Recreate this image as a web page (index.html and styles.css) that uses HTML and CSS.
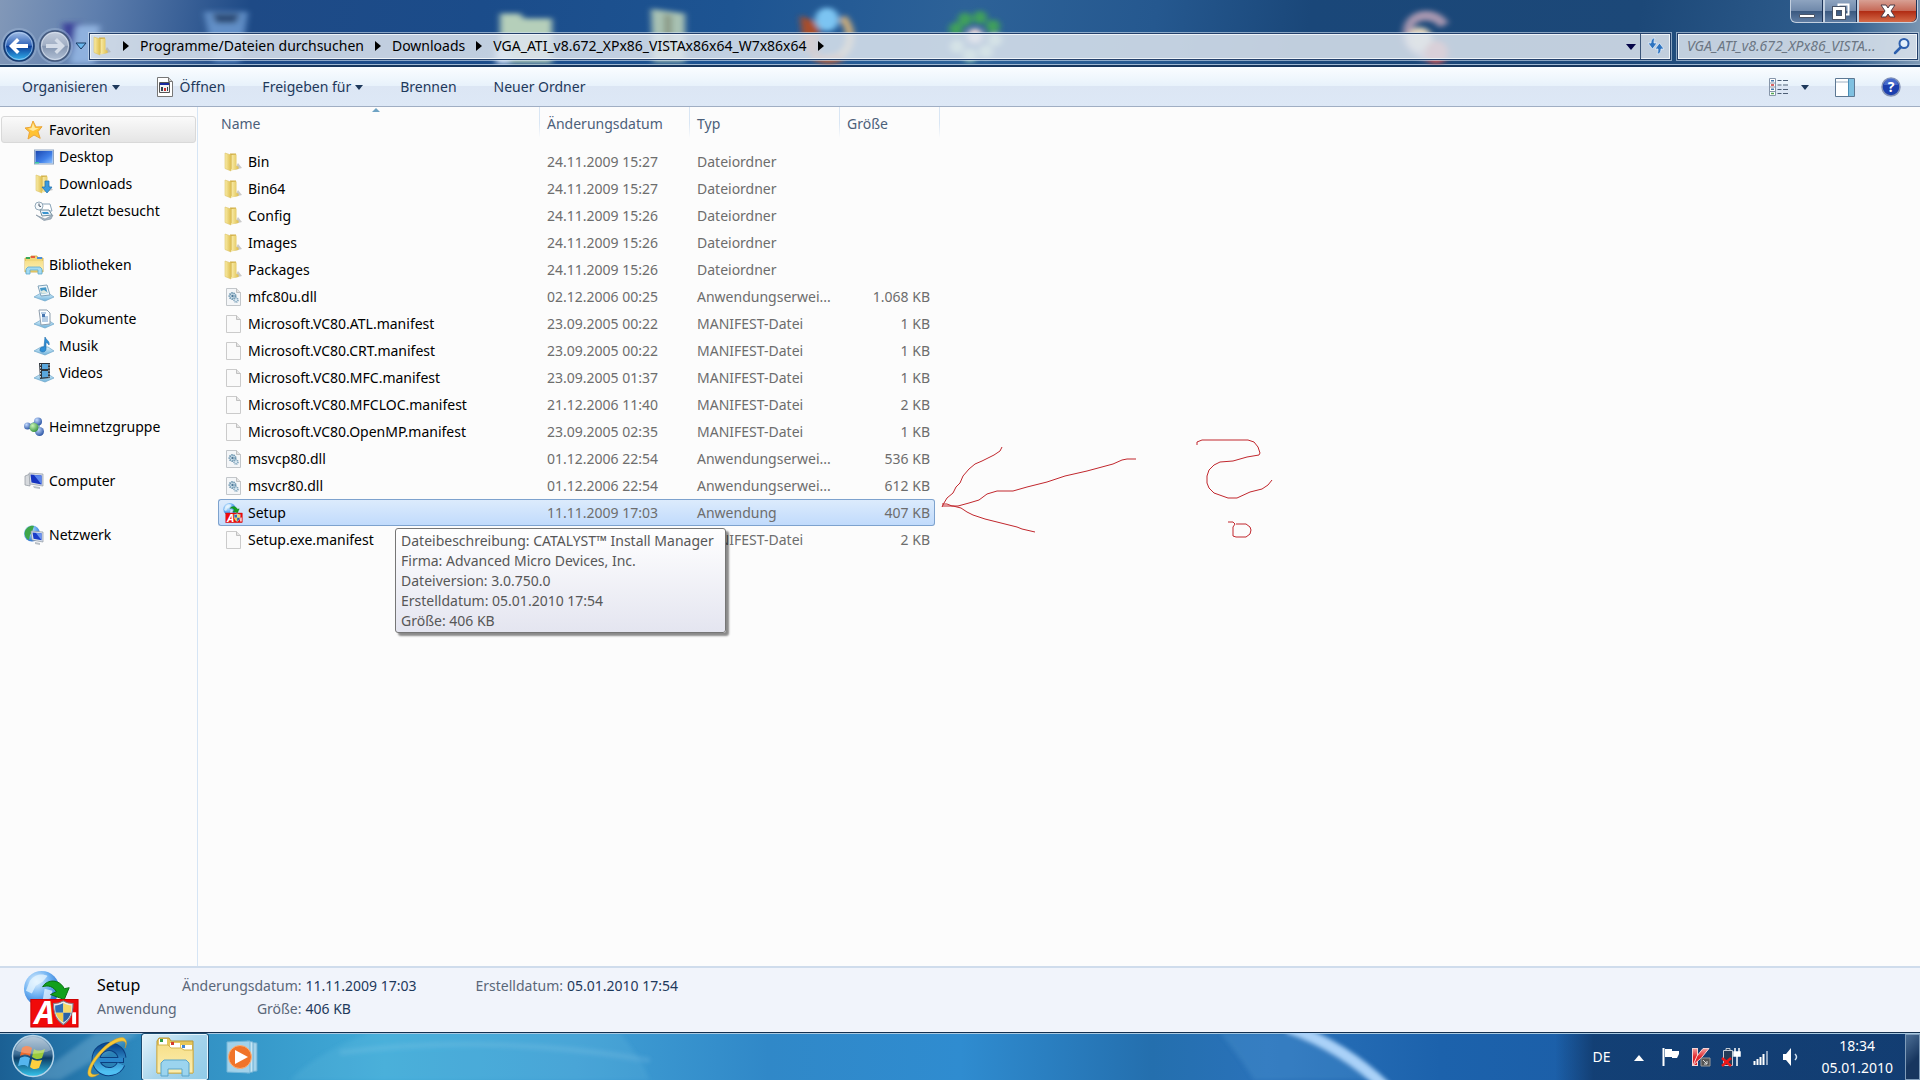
FILE: index.html
```html
<!DOCTYPE html>
<html lang="de">
<head>
    <meta charset="UTF-8">
    <meta name="viewport" content="width=device-width, initial-scale=1.0">
    <title>VGA_ATI_v8.672_XPx86_VISTAx86x64_W7x86x64</title>
    <link rel="stylesheet" href="styles.css">
</head>
<body>
    <!-- Icon library -->
    <svg class="icon-defs" aria-hidden="true">
        <defs>
            <linearGradient id="g-folder" x1="0" x2="1"><stop offset="0" stop-color="#f9eca8"/><stop offset="1" stop-color="#dfbf4e"/></linearGradient>
            <linearGradient id="g-folder-v" x1="0" y1="0" x2="0" y2="1"><stop offset="0" stop-color="#f7e08a"/><stop offset="1" stop-color="#fbeeb0"/></linearGradient>
            <linearGradient id="g-blue" x1="0" y1="0" x2="1" y2="1"><stop offset="0" stop-color="#1c48b0"/><stop offset=".6" stop-color="#3f7fe8"/><stop offset="1" stop-color="#8cc0ff"/></linearGradient>
            <linearGradient id="g-tray" x1="0" y1="0" x2="0" y2="1"><stop offset="0" stop-color="#d8effa"/><stop offset="1" stop-color="#6fb2dc"/></linearGradient>
            <linearGradient id="g-back" x1="0" y1="0" x2="0" y2="1"><stop offset="0" stop-color="#a9c4ea"/><stop offset=".48" stop-color="#2f63b8"/><stop offset=".5" stop-color="#0b3a96"/><stop offset="1" stop-color="#35b9f2"/></linearGradient>
            <linearGradient id="g-fwd" x1="0" y1="0" x2="0" y2="1"><stop offset="0" stop-color="#c4cedd"/><stop offset=".48" stop-color="#a0aec4"/><stop offset=".5" stop-color="#8495b0"/><stop offset="1" stop-color="#b4c3d8"/></linearGradient>
            <linearGradient id="g-orb" x1="0" y1="0" x2="0" y2="1"><stop offset="0" stop-color="#9fb9cf"/><stop offset=".45" stop-color="#3c6d95"/><stop offset=".55" stop-color="#0c3d66"/><stop offset="1" stop-color="#35c6ee"/></linearGradient>
            <radialGradient id="g-globe" cx=".35" cy=".3" r=".8"><stop offset="0" stop-color="#e4f4ff"/><stop offset=".5" stop-color="#6cb0f2"/><stop offset="1" stop-color="#1d5fc4"/></radialGradient>
            <radialGradient id="g-ball" cx=".35" cy=".3" r=".8"><stop offset="0" stop-color="#c5dcff"/><stop offset="1" stop-color="#1c489c"/></radialGradient>
            <radialGradient id="g-green" cx=".35" cy=".3" r=".8"><stop offset="0" stop-color="#c8f5b5"/><stop offset="1" stop-color="#2c8a35"/></radialGradient>
            <linearGradient id="g-ie" x1="0" y1="0" x2="0" y2="1"><stop offset="0" stop-color="#0c4c93"/><stop offset="1" stop-color="#4fc0f2"/></linearGradient>
            <linearGradient id="g-kav" x1="0" y1="0" x2="0" y2="1"><stop offset="0" stop-color="#f3a0a0"/><stop offset=".5" stop-color="#e0262c"/></linearGradient>
            <filter id="blur-icons" x="-30%" y="-30%" width="160%" height="160%"><feGaussianBlur stdDeviation="3"/></filter>
            <filter id="blur-streak" x="-30%" y="-30%" width="160%" height="160%"><feGaussianBlur stdDeviation="2"/></filter>

            <symbol id="i-folder" viewBox="0 0 20 20">
                <path d="M11 18l8-2-4-5z" fill="#a9a9a9" opacity=".6"/>
                <path d="M7 1.500h6V15l-6 3z" fill="#d2b048"/>
                <path d="M8.500 3l5-.5V14l2 .5V17l-7 1.500z" fill="url(#g-folder)"/>
                <path d="M2 1l6 2v16L2 16.500z" fill="url(#g-folder)" stroke="#dcc267" stroke-width=".6"/>
            </symbol>
            <symbol id="i-file" viewBox="0 0 20 20">
                <path d="M3.500 1.500h10l4 4v13h-14z" fill="#fafafa" stroke="#cbcbcb"/>
                <path d="M13.500 1.500v4h4" fill="#e4e4e4" stroke="#b5b5b5" stroke-width=".8"/>
            </symbol>
            <symbol id="i-dll" viewBox="0 0 20 20">
                <path d="M3.500 1.500h10l4 4v13h-14z" fill="#f4f6f8" stroke="#c2c6ca"/>
                <path d="M13.500 1.500v4h4" fill="#e4e4e4" stroke="#b5b5b5" stroke-width=".8"/>
                <circle cx="9.500" cy="9" r="3" fill="#d8e8f2" stroke="#6e96b0" stroke-width="2" stroke-dasharray="1.400 .7"/>
                <circle cx="9.500" cy="9" r="1.200" fill="#4d7795"/>
                <circle cx="13" cy="13" r="2" fill="#d8e8f2" stroke="#7ba0b8" stroke-width="1.500" stroke-dasharray="1 .6"/>
            </symbol>
            <symbol id="i-shield" viewBox="0 0 20 24">
                <path d="M10 1c3 2 6 2.500 9 2.500 0 9-2 15-9 19.500C3 18.500 1 12.500 1 3.500 4 3.500 7 3 10 1z" fill="#e8edf2" stroke="#7b7f86"/>
                <path d="M10 3v9H3c-.5-2-.6-4-.5-6.700C5 5.200 7.500 4.500 10 3z" fill="#2f70b5"/>
                <path d="M10 3v9h7c.5-2 .6-4 .5-6.700C15 5.200 12.500 4.500 10 3z" fill="#f5d868"/>
                <path d="M10 12v9c-4-2.500-6-5-7-9z" fill="#f2cc4d"/>
                <path d="M10 12v9c4-2.500 6-5 7-9z" fill="#2862a6"/>
            </symbol>
            <symbol id="i-setup" viewBox="0 0 58 58">
                <circle cx="19" cy="18" r="18" fill="url(#g-globe)"/>
                <path d="M7 10c6-8 14-7 18-5l-5 6-7 4-4 8-6-3zM22 18l8 2-2 8-8 2z" fill="#e7f5ff" opacity=".75"/>
                <path d="M20 16c5-8 17-8 22 2l5-1-5 12-14-5 6-3c-3-5-8-7-14-5z" fill="#12a01c" stroke="#087010"/>
                <rect x="8" y="29" width="48" height="28" fill="#f00a0a" stroke="#c00"/>
                <text x="12" y="54" class="logo-a">A</text>
                <path d="M50 42h4v12h-4z" fill="#fff"/>
                <use href="#i-shield" x="30" y="29" width="22" height="27"/>
            </symbol>
            <symbol id="i-star" viewBox="0 0 20 20">
                <path d="M9 1l3 6 6-.3-4 5 2.200 6.600L10 15l-6 4 1.500-7L1 8l5.800-.8z" fill="#ffc233" stroke="#eaa53a"/>
                <path d="M9 3l2 5 4 .3L9 11 4 8.800 7.500 8z" fill="#ffe9a0"/>
            </symbol>
            <symbol id="i-desktop" viewBox="0 0 20 20">
                <rect x=".5" y="3" width="19" height="14" fill="#d5e3f5" stroke="#8fa5c2"/>
                <rect x="1.500" y="4" width="17" height="12" fill="url(#g-blue)"/>
                <path d="M1 15h4v1.500H1z" fill="#3cc8a0"/>
            </symbol>
            <symbol id="i-downloads" viewBox="0 0 20 20">
                <use href="#i-folder" width="20" height="20"/>
                <path d="M11 7h4v6h3l-5 6-5-6h3z" fill="#3b9ade" stroke="#1b6fb0" stroke-width=".7"/>
            </symbol>
            <symbol id="i-recent" viewBox="0 0 20 20">
                <path d="M5 3h11l2 7H7z" fill="#fff" stroke="#8aa4b8"/>
                <circle cx="5" cy="5" r="4" fill="#f5f9fc" stroke="#93a9b9"/>
                <path d="M5 2.500V5l2 .5" fill="none" stroke="#456"/>
                <path d="M6 9h9l3 5-10 1z" fill="#e9f3fa" stroke="#75909f"/>
                <path d="M8 11h6l1 2H9z" fill="#3994cf"/>
                <path d="M2 14l9 4 8-4-2 4-7 1.500z" fill="#a7b8c6" stroke="#7a8c9a" stroke-width=".6"/>
            </symbol>
            <symbol id="i-libs" viewBox="0 0 20 20">
                <path d="M1 3h5l1-2h6l1 2h5v14H1z" fill="#f0d77a" stroke="#c9a63c" stroke-width=".8"/>
                <path d="M2 2h4v2H2z" fill="#38a856"/><path d="M7 1h4v2H7z" fill="#e65b3c"/><path d="M13 2h5v2h-5z" fill="#4c8ed8"/>
                <path d="M1 6h18v9H1z" fill="url(#g-folder-v)"/>
                <path d="M2 19v-5l2-2h12l2 2v5h-4v-4H6v4z" fill="#a3dbf2" stroke="#5ea9cf" stroke-width=".8"/>
            </symbol>
            <symbol id="i-base" viewBox="0 0 20 20">
                <path d="M0 15l7-4h7l6 4-9 4z" fill="url(#g-tray)" stroke="#6fa6c9" stroke-width=".7"/>
            </symbol>
            <symbol id="i-pictures" viewBox="0 0 20 20">
                <use href="#i-base" width="20" height="20"/>
                <path d="M4 4l9-1 3 10-9 1z" fill="#f0f7fb" stroke="#7fa2b9"/><path d="M6 6l6-.7L13.500 11l-6 .7z" fill="#4396c6"/><path d="M7 9l3-1 3 2 .5 1-6 .7z" fill="#dfe9df"/>
            </symbol>
            <symbol id="i-documents" viewBox="0 0 20 20">
                <use href="#i-base" width="20" height="20"/>
                <path d="M5 1h8l3 3v11l-9 1z" fill="#fbfdff" stroke="#8f9fae"/><path d="M7 4h5M8 8h6M8 10h6M8 12h6" stroke="#6f9ccb"/><path d="M8 5h3v3H8z" fill="#4776b0"/>
            </symbol>
            <symbol id="i-music" viewBox="0 0 20 20">
                <use href="#i-base" width="20" height="20"/>
                <path d="M11 1c1 3 5 4 4 8-1-2-2-2-3-2.500V13c0 4-7 4-6 0 .5-2 3-2.500 4-2z" fill="#2f8fd6" stroke="#1d6aa8" stroke-width=".6"/>
            </symbol>
            <symbol id="i-videos" viewBox="0 0 20 20">
                <use href="#i-base" width="20" height="20"/>
                <path d="M5 0h11v15L6 16z" fill="#2d343c"/><path d="M8 1h6v5H8zM8 8h6v6l-6 .5z" fill="#5aa7dd"/><path d="M6.500 1v14M15 1v14" stroke="#cdd7df" stroke-dasharray="1.500 1.500"/>
            </symbol>
            <symbol id="i-homegroup" viewBox="0 0 20 20">
                <path d="M4 9L15 3M4 9l11 7M15 3v13" stroke="#7aa" stroke-width="1.500"/>
                <circle cx="3.500" cy="9" r="3.500" fill="url(#g-ball)"/><circle cx="14" cy="4.500" r="4" fill="url(#g-ball)"/><circle cx="15.500" cy="14.500" r="4.500" fill="url(#g-ball)"/><circle cx="10" cy="10.500" r="4.500" fill="url(#g-green)"/>
            </symbol>
            <symbol id="i-computer" viewBox="0 0 20 20">
                <path d="M1 5l5-2v12l-5-1z" fill="#d6d9dd" stroke="#8d949c" stroke-width=".7"/>
                <path d="M5 2l14 1v12L6 13z" fill="#d9dee4" stroke="#949ba5" stroke-width=".7"/><path d="M6.500 3.500l11 1v9l-10-2z" fill="#1634c0"/><path d="M10 4l7.500.5v9z" fill="#5b86ee"/>
                <path d="M9 15l7 1v2l-6-1z" fill="#b9c0c7"/>
            </symbol>
            <symbol id="i-network" viewBox="0 0 20 20">
                <circle cx="8" cy="8.500" r="8" fill="url(#g-globe)"/><path d="M1 6c2-5 7-6 9-5L8 7l-2 3-1 5C1 13 0 9 1 6z" fill="#3ea64a"/>
                <path d="M7 6l12 1v10L8 15z" fill="#dfe5ec" stroke="#8c96a3" stroke-width=".7"/><path d="M8.500 7.500l9 .7v7l-8-1.500z" fill="#1a3cc8"/><path d="M12 8l5.500.3v7z" fill="#6b95f0"/>
                <path d="M11 17l5 1v2l-5-1z" fill="#b9c0c7"/>
            </symbol>
            <symbol id="i-exe" viewBox="0 0 16 20">
                <path d="M.5.500h11l4 4v15H.5z" fill="#fff" stroke="#777"/><path d="M11.500.500v4h4" fill="#ccc" stroke="#777"/>
                <path d="M2.500 5.500h10v10h-10z" fill="#f4f4f4" stroke="#555"/><path d="M3 6h9v2H3z" fill="#1b2aa0"/><path d="M4 10h2v4H4zM10 10h1v4h-1z" fill="#345"/><path d="M7 11h2v3H7z" fill="#c33"/>
            </symbol>
        </defs>
    </svg>

    <header class="titlebar">
        <svg class="wallpaper" viewBox="0 0 1920 67" preserveAspectRatio="none" aria-hidden="true">
            <g filter="url(#blur-icons)">
                <path d="M62 24h20v30H70z" fill="#3b3f9a"/><path d="M76 26h24l-6 40H70z" fill="#8fb1de"/>
                <path d="M204 12h44l-8 52h-26z" fill="#6f9fd6" opacity=".8"/><path d="M212 14h28l-4 10h-20z" fill="#2d4d78"/>
                <path d="M500 14h20l4 5h28v46h-52z" fill="#b5cfba"/><path d="M496 50h14v16h-14z" fill="#cfe0f5"/>
                <path d="M651 9l34 5v50h-32z" fill="#a9c2b4"/><path d="M664 14l8 2v40h-8z" fill="#8a9a85"/>
                <path d="M842 18c14 14 10 44-16 42" fill="none" stroke="#d3b07a" stroke-width="8"/><path d="M800 16l20 8-2 34-14-6z" fill="#a84d2c"/><path d="M812 56q14 10 30 2" fill="none" stroke="#b5603c" stroke-width="8"/><circle cx="827" cy="20" r="12" fill="#7cc4f2"/>
                <g fill="#3fa05c"><circle cx="956" cy="30" r="7"/><circle cx="965" cy="20" r="7"/><circle cx="980" cy="18" r="7"/><circle cx="993" cy="27" r="7"/></g>
                <g fill="#a9d8bc"><circle cx="995" cy="41" r="7"/><circle cx="986" cy="53" r="7"/><circle cx="970" cy="57" r="7"/><circle cx="957" cy="48" r="7"/></g>
                <circle cx="975" cy="37" r="8" fill="#eed7d7"/>
                <path d="M1444 26c-8-14-34-14-36 6-2 14 8 20 20 26" fill="none" stroke="#a797b0" stroke-width="10"/><circle cx="1420" cy="40" r="12" fill="#e6d8c0"/><circle cx="1436" cy="54" r="12" fill="#c4575a"/>
            </g>
        </svg>
        <div class="window-controls">
            <button class="control" aria-label="Minimieren"><svg width="18" height="8" viewBox="0 0 18 8"><path d="M1.500 3.500h15v3h-15z" fill="#fff" stroke="#4a5568"/></svg></button>
            <button class="control" aria-label="Verkleinern"><svg width="18" height="17" viewBox="0 0 18 17"><path d="M6.500 3V1.500h10v10h-3" fill="none" stroke="#fff" stroke-width="2"/><path d="M2.500 5.500h9v9h-9z" fill="none" stroke="#4a5568" stroke-width="5"/><path d="M2.500 5.500h9v9h-9z" fill="none" stroke="#fff" stroke-width="3"/></svg></button>
            <button class="control close" aria-label="Schließen"><svg width="16" height="14" viewBox="0 0 16 14"><path d="M1 1h5l2 3 2-3h5l-4 6 4 6h-5l-2-3-2 3H1l4-6z" fill="#fff" stroke="#4d3b46"/></svg></button>
        </div>
        <div class="nav-row">
            <div class="history">
                <button class="round" aria-label="Zurück"><svg viewBox="0 0 32 32"><circle cx="16" cy="16" r="15" fill="url(#g-back)" stroke="#173a70" stroke-width="1.500"/><circle cx="16" cy="16" r="13.500" fill="none" stroke="#b5d0f0" opacity=".7"/><path d="M6 16l8-8 2.500 2.500L13 14h12v4H13l3.500 3.500L14 24z" fill="#fff"/></svg></button>
                <button class="round" aria-label="Vorwärts"><svg viewBox="0 0 32 32"><circle cx="16" cy="16" r="15" fill="url(#g-fwd)" stroke="#44597c" stroke-width="1.500"/><circle cx="16" cy="16" r="13.500" fill="none" stroke="#dde6f2" opacity=".7"/><path d="M26 16l-8-8-2.500 2.500L19 14H7v4h12l-3.500 3.500L18 24z" fill="#d4dce8"/></svg></button>
                <button class="pages" aria-label="Zuletzt besuchte Seiten"><svg width="12" height="8" viewBox="0 0 12 8"><path d="M1 1h10L6 7z" fill="#6db8ee" stroke="#173a63"/></svg></button>
            </div>
            <nav class="address" aria-label="Adresse">
                <svg class="icon" aria-hidden="true"><use href="#i-folder"/></svg>
                <span class="arrow"></span>
                <button>Programme/Dateien durchsuchen</button>
                <span class="arrow"></span>
                <button>Downloads</button>
                <span class="arrow"></span>
                <button>VGA_ATI_v8.672_XPx86_VISTAx86x64_W7x86x64</button>
                <span class="arrow"></span>
                <button class="drop" aria-label="Vorherige Orte"><svg width="12" height="8" viewBox="0 0 12 8"><path d="M1 1h10L6 7z" fill="#050548"/></svg></button>
                <button class="refresh" aria-label="Aktualisieren"><svg width="18" height="20" viewBox="0 0 18 20"><path d="M8 2C5 2 4 4 4 7H1l4.500 6L10 7H7c0-2 0-3 1-5z" fill="#2f74c0" stroke="#eaf3ff" stroke-width=".7"/><path d="M10 18c3 0 4-2 4-5h3l-4.500-6L8 13h3c0 2 0 3-1 5z" fill="#2f74c0" stroke="#eaf3ff" stroke-width=".7"/></svg></button>
            </nav>
            <div class="search">
                <input type="search" aria-label="Suchen" placeholder="VGA_ATI_v8.672_XPx86_VISTA...">
                <svg width="18" height="18" viewBox="0 0 18 18" aria-hidden="true"><circle cx="11" cy="6.500" r="4.500" fill="#e4f0fb" stroke="#2d5fae" stroke-width="2"/><path d="M8 10l-6 6" stroke="#2d5fae" stroke-width="2.500" stroke-linecap="round"/></svg>
            </div>
        </div>
    </header>

    <div class="toolbar">
        <button>Organisieren <span class="caret"></span></button>
        <button class="open"><svg width="16" height="20" aria-hidden="true"><use href="#i-exe"/></svg>Öffnen</button>
        <button>Freigeben für <span class="caret"></span></button>
        <button>Brennen</button>
        <button>Neuer Ordner</button>
        <div class="toolbar-right">
            <button aria-label="Ansicht ändern"><svg width="20" height="18" viewBox="0 0 20 18"><path d="M.5.500h6v17h-6z" fill="#fff" stroke="#8796aa"/><path d="M.5 5h6M.5 9h6M.5 13.500h6" stroke="#8796aa"/><path d="M2 2.800h3M2 11.200h3" stroke="#47a" stroke-width="1.500"/><path d="M2 7h3" stroke="#c33" stroke-width="1.500"/><path d="M2 15.500h3" stroke="#5a5" stroke-width="1.500"/><path d="M8.500 2.500h4M14 2.500h5M8.500 7h4M14 7h5M8.500 11.500h4M14 11.500h5M8.500 15.500h4M14 15.500h5" stroke="#4d5e75"/></svg></button>
            <button aria-label="Weitere Optionen"><span class="caret"></span></button>
            <button class="preview" aria-label="Vorschaufenster"><svg width="20" height="19" viewBox="0 0 20 19"><path d="M.5.500h19v18H.5z" fill="#fff" stroke="#5d7893"/><path d="M1 4h12" stroke="#9fb0c2"/><path d="M13 1h6v17h-6z" fill="#7fc0e0"/><path d="M13.500 1v17" stroke="#4a8db5"/></svg></button>
            <button aria-label="Hilfe"><svg width="20" height="20" viewBox="0 0 20 20"><circle cx="10" cy="10" r="9" fill="#1c3fae" stroke="#8593b5" stroke-width="1.500"/><path d="M3 8a7 7 0 0 1 14 0z" fill="#6386dc" opacity=".6"/><text x="10" y="15" class="help-mark">?</text></svg></button>
        </div>
    </div>

    <div class="explorer">
        <nav class="sidebar" aria-label="Navigation">
            <a href="#" class="place selected"><svg class="icon"><use href="#i-star"/></svg>Favoriten</a>
            <a href="#" class="place child"><svg class="icon"><use href="#i-desktop"/></svg>Desktop</a>
            <a href="#" class="place child"><svg class="icon"><use href="#i-downloads"/></svg>Downloads</a>
            <a href="#" class="place child last"><svg class="icon"><use href="#i-recent"/></svg>Zuletzt besucht</a>
            <a href="#" class="place"><svg class="icon"><use href="#i-libs"/></svg>Bibliotheken</a>
            <a href="#" class="place child"><svg class="icon"><use href="#i-pictures"/></svg>Bilder</a>
            <a href="#" class="place child"><svg class="icon"><use href="#i-documents"/></svg>Dokumente</a>
            <a href="#" class="place child"><svg class="icon"><use href="#i-music"/></svg>Musik</a>
            <a href="#" class="place child last"><svg class="icon"><use href="#i-videos"/></svg>Videos</a>
            <a href="#" class="place last"><svg class="icon"><use href="#i-homegroup"/></svg>Heimnetzgruppe</a>
            <a href="#" class="place last"><svg class="icon"><use href="#i-computer"/></svg>Computer</a>
            <a href="#" class="place"><svg class="icon"><use href="#i-network"/></svg>Netzwerk</a>
        </nav>

        <main class="files">
            <table>
                <colgroup><col class="col-name"><col class="col-date"><col class="col-type"><col class="col-size"><col class="col-end"></colgroup>
                <thead>
                    <tr><th class="sorted">Name</th><th>Änderungsdatum</th><th>Typ</th><th colspan="2">Größe</th></tr>
                </thead>
                <tbody>
                    <tr><td><svg class="icon"><use href="#i-folder"/></svg>Bin</td><td>24.11.2009 15:27</td><td>Dateiordner</td><td></td></tr>
                    <tr><td><svg class="icon"><use href="#i-folder"/></svg>Bin64</td><td>24.11.2009 15:27</td><td>Dateiordner</td><td></td></tr>
                    <tr><td><svg class="icon"><use href="#i-folder"/></svg>Config</td><td>24.11.2009 15:26</td><td>Dateiordner</td><td></td></tr>
                    <tr><td><svg class="icon"><use href="#i-folder"/></svg>Images</td><td>24.11.2009 15:26</td><td>Dateiordner</td><td></td></tr>
                    <tr><td><svg class="icon"><use href="#i-folder"/></svg>Packages</td><td>24.11.2009 15:26</td><td>Dateiordner</td><td></td></tr>
                    <tr><td><svg class="icon"><use href="#i-dll"/></svg>mfc80u.dll</td><td>02.12.2006 00:25</td><td>Anwendungserwei...</td><td>1.068 KB</td></tr>
                    <tr><td><svg class="icon"><use href="#i-file"/></svg>Microsoft.VC80.ATL.manifest</td><td>23.09.2005 00:22</td><td>MANIFEST-Datei</td><td>1 KB</td></tr>
                    <tr><td><svg class="icon"><use href="#i-file"/></svg>Microsoft.VC80.CRT.manifest</td><td>23.09.2005 00:22</td><td>MANIFEST-Datei</td><td>1 KB</td></tr>
                    <tr><td><svg class="icon"><use href="#i-file"/></svg>Microsoft.VC80.MFC.manifest</td><td>23.09.2005 01:37</td><td>MANIFEST-Datei</td><td>1 KB</td></tr>
                    <tr><td><svg class="icon"><use href="#i-file"/></svg>Microsoft.VC80.MFCLOC.manifest</td><td>21.12.2006 11:40</td><td>MANIFEST-Datei</td><td>2 KB</td></tr>
                    <tr><td><svg class="icon"><use href="#i-file"/></svg>Microsoft.VC80.OpenMP.manifest</td><td>23.09.2005 02:35</td><td>MANIFEST-Datei</td><td>1 KB</td></tr>
                    <tr><td><svg class="icon"><use href="#i-dll"/></svg>msvcp80.dll</td><td>01.12.2006 22:54</td><td>Anwendungserwei...</td><td>536 KB</td></tr>
                    <tr><td><svg class="icon"><use href="#i-dll"/></svg>msvcr80.dll</td><td>01.12.2006 22:54</td><td>Anwendungserwei...</td><td>612 KB</td></tr>
                    <tr class="selected"><td><svg class="icon"><use href="#i-setup"/></svg>Setup</td><td>11.11.2009 17:03</td><td>Anwendung</td><td>407 KB</td></tr>
                    <tr><td><svg class="icon"><use href="#i-file"/></svg>Setup.exe.manifest</td><td></td><td>MANIFEST-Datei</td><td>2 KB</td></tr>
                </tbody>
            </table>

            <div class="tooltip" role="tooltip">
                Dateibeschreibung: CATALYST™ Install Manager<br>
                Firma: Advanced Micro Devices, Inc.<br>
                Dateiversion: 3.0.750.0<br>
                Erstelldatum: 05.01.2010 17:54<br>
                Größe: 406 KB
            </div>

            <!-- Red pen: arrow and question mark -->
            <svg class="scribble" width="340" height="102" viewBox="938 438 340 102" aria-hidden="true">
                <path d="M1002 447l-2 4-6 4-12 6-7 3-6 5-6 7-3 7-4 4-3 6-6 5-3 5-2 4"/>
                <path d="M942 504h5l5 2h6l11-3 10-3 8-6 10-3h16l14-4 20-5 18-6 22-5 26-7 9-4 5-1h9"/>
                <path d="M942 506h11l8 2 6 4 6 3 12 4 12 3 20 5 5 2 13 3"/>
                <path d="M1197 445v-3l5-2h46l6 2 4 5 2 6-1 2-12 2-14 4-13 1-6 3-5 5-2 6v7l2 5 5 5 14 5h9l13-6 12-3 6-4 4-5"/>
                <path d="M1228 522h5l2 2-2 3v9l3 1h10l4-3 1-4-1-3-4-3h-10"/>
            </svg>
        </main>
    </div>

    <footer class="details">
        <svg class="details-icon" aria-hidden="true"><use href="#i-setup"/></svg>
        <div class="details-name">
            <strong>Setup</strong>
            <span>Anwendung</span>
        </div>
        <dl>
            <dt>Änderungsdatum:</dt><dd>11.11.2009 17:03</dd>
            <dt>Größe:</dt><dd>406 KB</dd>
        </dl>
        <dl class="created">
            <dt>Erstelldatum:</dt><dd>05.01.2010 17:54</dd>
        </dl>
    </footer>

    <div class="taskbar">
        <svg class="wallpaper" viewBox="0 0 1920 48" preserveAspectRatio="none" aria-hidden="true">
            <g filter="url(#blur-streak)">
                <path d="M30 48L95 0h45L60 48z" fill="#9cc9e6" opacity=".3"/>
                <path d="M290 48q30-30 80-48h250q20 24 30 48z" fill="#8fd4f0" opacity=".12"/>
                <path d="M340 20q150-20 310 8" fill="none" stroke="#b9e4f6" stroke-width="5" opacity=".15"/>
                <path d="M1220 0q20 24 34 48h120q-30-30-80-48z" fill="#5fa5dc" opacity=".25"/>
                <path d="M1288-6q56 20 98 62" fill="none" stroke="#aad2f8" stroke-width="12"/>
            </g>
        </svg>
        <button class="start" aria-label="Start"><svg width="44" height="44" viewBox="0 0 44 44"><circle cx="22" cy="22" r="20.500" fill="url(#g-orb)" stroke="#b5d4e8" stroke-width="1.500"/><path d="M11 14c4-3 7-2 10 0l-2 8c-3-2-6-2-10 0z" fill="#ee6a2c"/><path d="M23 15c3 2 6 2 11 0l-3 9c-4 2-7 1-10-1z" fill="#9bcb3c"/><path d="M9 24c4-2 7-2 10 0l-2 9c-3-3-6-2-10-1z" fill="#55b5ee"/><path d="M21 25c3 2 6 2 10 1l-3 8c-4 2-7 1-9-1z" fill="#fccf3f"/><path d="M4 16a19 19 0 0 1 36 0c-10 5-26 5-36 0z" fill="#fff" opacity=".28"/></svg></button>
        <button class="task" aria-label="Internet Explorer"><svg width="42" height="42" viewBox="0 0 42 42"><path d="M35 28a13 12.500 0 1 1 1-6" fill="none" stroke="#0b3f80" stroke-width="9"/><path d="M13 24h25" stroke="#0b3f80" stroke-width="6"/><path d="M35 28a13 12.500 0 1 1 1-6" fill="none" stroke="url(#g-ie)" stroke-width="7"/><path d="M13 24h24" stroke="#2b86ca" stroke-width="4"/><path d="M39 3c-3-4-14 1-23 10C6 23-1 36 3 40c2 2 6 1 10-2-4 1-7 1-8-1-1-5 5-14 13-22 9-8 18-12 21-9 1 1 1 3 0 6 2-4 2-7 0-9z" fill="#f5c837" stroke="#c9952a" stroke-width=".5"/></svg></button>
        <button class="task active" aria-label="Explorer"><svg width="42" height="42" viewBox="0 0 42 42"><path d="M3 5l2-3h10l2 3h22v32H3z" fill="#e6c65a" stroke="#b9973a"/><path d="M5 3h8v6H5zM16 7h10v6H16zM27 9h11v6H27z" fill="#fff"/><path d="M6 3h3v3H6z" fill="#2f9a45"/><path d="M17 6h3v3h-3z" fill="#d63a2c"/><path d="M28 9h3v3h-3z" fill="#3d82d6"/><path d="M3 9h11l3 3h10l3 2h9v23H3z" fill="url(#g-folder-v)" stroke="#d4b552"/><path d="M7 40V27l3-3h22l3 3v13h-7v-7H14v7z" fill="#9bd4ee" stroke="#5ba5cb"/></svg></button>
        <button class="task" aria-label="Media Player"><svg width="36" height="36" viewBox="0 0 36 36"><path d="M24 3l8 1v28l-8 1z" fill="#a6d3ea" stroke="#6aaed2"/><path d="M22 2l6 1v30l-6 1z" fill="#c5e6f5" stroke="#6aaed2"/><path d="M2 3l23-1v32L2 33z" fill="#a2d2ea" stroke="#74b7d9"/><circle cx="15" cy="18" r="11.500" fill="#f0742a" stroke="#f9b27c"/><path d="M10 11l13 7-13 7z" fill="#fff"/></svg></button>

        <div class="tray">
            <span class="lang">DE</span>
            <button aria-label="Ausgeblendete Symbole"><svg width="12" height="8" viewBox="0 0 12 8"><path d="M6 1l5 6H1z" fill="#fff"/></svg></button>
            <svg width="20" height="20" viewBox="0 0 20 20"><path d="M2.500 1v18" stroke="#fff" stroke-width="2"/><path d="M4 2h7v2h7v3l-2 4h-5v-1H4z" fill="#fff"/></svg>
            <svg width="20" height="20" viewBox="0 0 20 20"><rect x="1.500" y="1.500" width="5" height="17" fill="url(#g-kav)" stroke="#f6d5d5"/><path d="M18 1.500h-6L6 9l-4 9.500L11 10z" fill="url(#g-kav)" stroke="#f6d5d5"/><path d="M10 11h9v8h-9z" fill="#555" stroke="#999"/><path d="M12 13l4 4m0-3v3h-3" stroke="#ddd" fill="none"/></svg>
            <svg width="20" height="20" viewBox="0 0 20 20"><path d="M2.500 3.500h9v15h-9zM5 1.500h4v2H5z" fill="#253c58" stroke="#c5cdd6"/><path d="M13 5v4h6V5zM14 1v4M18 1v4M16 9v10" stroke="#fff" stroke-width="1.500" fill="#fff"/><path d="M1 11l9 8M10 11l-9 8" stroke="#f01818" stroke-width="2.500"/></svg>
            <svg width="20" height="20" viewBox="0 0 20 20"><path d="M3.500 14v4M6.500 12v6M9.500 10v8M12.500 7v11" stroke="#fff" stroke-width="2"/><path d="M16 4v14" stroke="#8fa4bf" stroke-width="2"/></svg>
            <svg width="20" height="20" viewBox="0 0 20 20"><path d="M2 7h3l5-6v18l-5-6H2z" fill="#fff"/><path d="M14 7c2 2 2 4 0 6" stroke="#cfe0f0" fill="none" stroke-width="1.500"/></svg>
            <div class="clock"><span>18:34</span><span>05.01.2010</span></div>
        </div>
        <button class="show-desktop" aria-label="Desktop anzeigen"></button>
    </div>
</body>
</html>
```
FILE: styles.css
```css
* {
    margin: 0;
    padding: 0;
    box-sizing: border-box;
}

body {
    display: flex;
    flex-direction: column;
    min-height: 100vh;
    background: #fcfcfc;
    color: #000;
    font-family: 'Noto Sans', 'Open Sans', sans-serif;
    font-size: 14px;
    line-height: 20px;
    overflow: hidden;
}

button {
    background: none;
    border: none;
    color: inherit;
    font: inherit;
    white-space: nowrap;
}

a {
    color: inherit;
    text-decoration: none;
}

.icon-defs {
    position: absolute;
    width: 0;
    height: 0;
}

.icon {
    width: 20px;
    height: 20px;
    flex: none;
}

.logo-a {
    font: italic bold 32px 'Noto Sans', sans-serif;
    fill: #fff;
}

.help-mark {
    font: bold 14px 'Open Sans', sans-serif;
    fill: #fff;
    text-anchor: middle;
}

/* Title bar */
.titlebar {
    position: relative;
    background: linear-gradient(100deg, #8298b8 0, #5f7fae 5%, #1e4a86 13%, #1b4c8a 25%, #1d5492 38%, #2d6298 50%, #25588f 60%, #1a4779 68%, #1c4878 85%, #315f8f 96%, #7f9ab5 100%);
    border-bottom: 2px solid #17365c;
    box-shadow: inset 0 -1px #9fb8d2;
}

.wallpaper {
    position: absolute;
    inset: 0;
    width: 100%;
    height: 100%;
}

.window-controls {
    position: relative;
    display: flex;
    justify-content: flex-end;
    height: 24px;
    padding-right: 2px;
}

.control {
    display: flex;
    align-items: center;
    justify-content: center;
    width: 34px;
    height: 23px;
    border: 1px solid #c3d0e0;
    border-top: none;
    box-shadow: inset -1px 0 #1c3358;
    background: linear-gradient(#8ea4c0 0, #7089ab 48%, #3a587f 50%, #5f7da3 100%);
}

.control:first-child {
    border-radius: 0 0 0 6px;
    padding-top: 8px;
}

.control.close {
    width: 60px;
    border-radius: 0 0 6px 0;
    background: linear-gradient(#d8a094 0, #c66a58 48%, #b02a12 50%, #d46a48 100%);
}

.nav-row {
    position: relative;
    display: flex;
    align-items: center;
    gap: 6px;
    height: 41px;
    padding: 3px 2px 0 3px;
}

.history {
    display: flex;
    align-items: center;
    gap: 4px;
    width: 80px;
}

.round {
    flex: none;
    width: 32px;
    height: 32px;
    border-radius: 50%;
    box-shadow: 0 0 0 2px rgba(160, 185, 215, .45);
}

.round svg,
.pages svg {
    display: block;
}

.address,
.search {
    display: flex;
    align-items: center;
    height: 27px;
    border: 1px solid #23406b;
    outline: 1px solid rgba(210, 225, 240, .6);
    box-shadow: inset 0 0 0 1px #eef3f8;
    background: rgba(220, 228, 238, .86);
}

.address {
    flex: 1;
    padding-left: 2px;
    gap: 11px;
}

.arrow {
    border-left: 6px solid #000;
    border-top: 5px solid transparent;
    border-bottom: 5px solid transparent;
}

.drop {
    margin-left: auto;
    margin-right: -8px;
}

.refresh {
    display: flex;
    align-items: center;
    justify-content: center;
    width: 30px;
    height: 25px;
    border-left: 1px solid #3a5478;
}

.search {
    width: 241px;
    padding: 0 6px 0 9px;
}

.search input {
    flex: 1;
    min-width: 0;
    border: none;
    background: none;
    font: inherit;
    font-style: italic;
}

.search input::placeholder {
    color: #6b7683;
}

/* Command bar */
.toolbar {
    display: flex;
    align-items: center;
    gap: 37px;
    height: 40px;
    padding: 1px 19px 0 22px;
    border-bottom: 1px solid #a0aec3;
    background: linear-gradient(#fafdff 0, #e8f2fb 48%, #dce6f4 50%, #dde8f6 100%);
    color: #1e395b;
}

.toolbar button {
    display: flex;
    align-items: center;
    gap: 4px;
}

.toolbar .open {
    gap: 7px;
}

.caret {
    border-top: 5px solid #1e395b;
    border-left: 4px solid transparent;
    border-right: 4px solid transparent;
}

.toolbar-right {
    display: flex;
    align-items: center;
    gap: 12px;
    margin-left: auto;
}

.toolbar-right .preview {
    margin: 0 14px;
}

/* Explorer body */
.explorer {
    display: flex;
    flex: 1;
}

.sidebar {
    flex: none;
    width: 198px;
    padding: 9px 1px;
    border-right: 1px solid #d6e5f5;
}

.place {
    display: flex;
    align-items: center;
    gap: 5px;
    height: 27px;
    padding-left: 22px;
    border: 1px solid transparent;
    border-radius: 3px;
}

.place.child {
    padding-left: 32px;
}

.place.last {
    margin-bottom: 27px;
}

.place.selected {
    border-color: #d9d9d9;
    background: linear-gradient(#fafafa, #e5e5e5);
}

.files {
    position: relative;
    flex: 1;
    padding-left: 20px;
}

table {
    table-layout: fixed;
    width: 722px;
    border-spacing: 0;
}

.col-name {
    width: 322px;
}

.col-date,
.col-type {
    width: 150px;
}

.col-size {
    width: 95px;
}

th {
    height: 41px;
    padding: 0 7px 7px;
    background: linear-gradient(#d9e6f4 40%, transparent 75%) right / 1px 100% no-repeat;
    color: #4c607a;
    font-weight: normal;
    text-align: left;
    vertical-align: middle;
}

th:first-child {
    padding-left: 3px;
}

.sorted {
    position: relative;
}

/* sort direction mark above the column name */
.sorted::after {
    content: '';
    position: absolute;
    top: 1px;
    left: 50%;
    margin-left: -7px;
    border-bottom: 4px solid #6fa3c4;
    border-left: 4px solid transparent;
    border-right: 4px solid transparent;
}

td {
    height: 27px;
    padding: 0 7px;
    color: #6d6d6d;
    white-space: nowrap;
}

td:first-child {
    display: flex;
    align-items: center;
    gap: 5px;
    padding-left: 5px;
    color: #000;
}

td:nth-child(4) {
    padding-right: 5px;
    text-align: right;
}

tr.selected td {
    border: solid #7da2ce;
    border-width: 1px 0;
    background: linear-gradient(#dcebfc, #c1dbfc);
}

tr.selected td:first-child {
    padding-left: 4px;
    border-left-width: 1px;
    border-radius: 3px 0 0 3px;
}

tr.selected td:last-child {
    padding-right: 4px;
    border-right-width: 1px;
    border-radius: 0 3px 3px 0;
}

.tooltip {
    position: absolute;
    top: 421px;
    left: 197px;
    padding: 2px 11px 1px 5px;
    border: 1px solid #767676;
    border-radius: 3px;
    background: linear-gradient(#fff, #e4e5f0);
    box-shadow: 3px 3px 2px rgba(0, 0, 0, .45);
    color: #575757;
    white-space: nowrap;
}

.scribble {
    position: absolute;
    top: 331px;
    left: 740px;
    fill: none;
    stroke: #c1272d;
    stroke-width: 1;
}

/* Details pane */
.details {
    display: flex;
    height: 66px;
    padding: 3px 23px;
    border-top: 2px solid #cfdcec;
    background: #f1f4fb;
    color: #5a6779;
}

.details-icon {
    width: 57px;
    height: 57px;
    margin-right: 17px;
}

.details-name {
    width: 85px;
    padding-top: 2px;
}

.details-name strong {
    display: block;
    margin-bottom: 2px;
    color: #000;
    font-size: 16px;
    font-weight: normal;
    line-height: 24px;
}

.details dl {
    display: grid;
    grid-template-columns: auto auto;
    align-content: start;
    gap: 3px 4px;
    padding-top: 5px;
}

.details dt {
    text-align: right;
}

.details dd {
    color: #1e395b;
}

.details .created {
    margin-left: 59px;
}

/* Taskbar */
.taskbar {
    position: relative;
    display: flex;
    align-items: center;
    height: 48px;
    border-top: 1px solid #14304f;
    box-shadow: inset 0 1px #a8c8e0;
    background:
        linear-gradient(90deg, transparent 81%, rgba(15, 50, 95, .7) 83%),
        linear-gradient(90deg, #1b6094 0, #2d88bd 7%, #41abd8 20%, #409fd4 30%, #3088c8 40%, #2f8cd0 50%, #246fae 60%, #2a72ba 66%, #1c62ac 75%, #1b58a0 100%);
    color: #fff;
}

.start,
.task,
.tray,
.show-desktop {
    position: relative;
}

.start {
    width: 66px;
    height: 46px;
}

.task {
    display: flex;
    align-items: center;
    justify-content: center;
    width: 66px;
    height: 46px;
    margin-left: 2px;
    border-radius: 2px;
}

.start + .task {
    margin-left: 8px;
}

.task.active {
    border: 1px solid #e5f4fc;
    outline: 1px solid #1c4c70;
    background: linear-gradient(135deg, #e3f2fa, #a8d5ec 50%, #90cbe8);
}

.tray {
    display: flex;
    align-items: center;
    gap: 10px;
    margin-left: auto;
    margin-right: 12px;
}

.lang {
    margin-right: 13px;
}

.tray button {
    margin-right: 6px;
}

.clock {
    display: flex;
    flex-direction: column;
    align-items: center;
    gap: 2px;
    margin-left: 10px;
}

.show-desktop {
    width: 15px;
    height: 46px;
    border: 1px solid #7f9cba;
    background: linear-gradient(135deg, #4d6f96, #17365f 60%);
}
```
